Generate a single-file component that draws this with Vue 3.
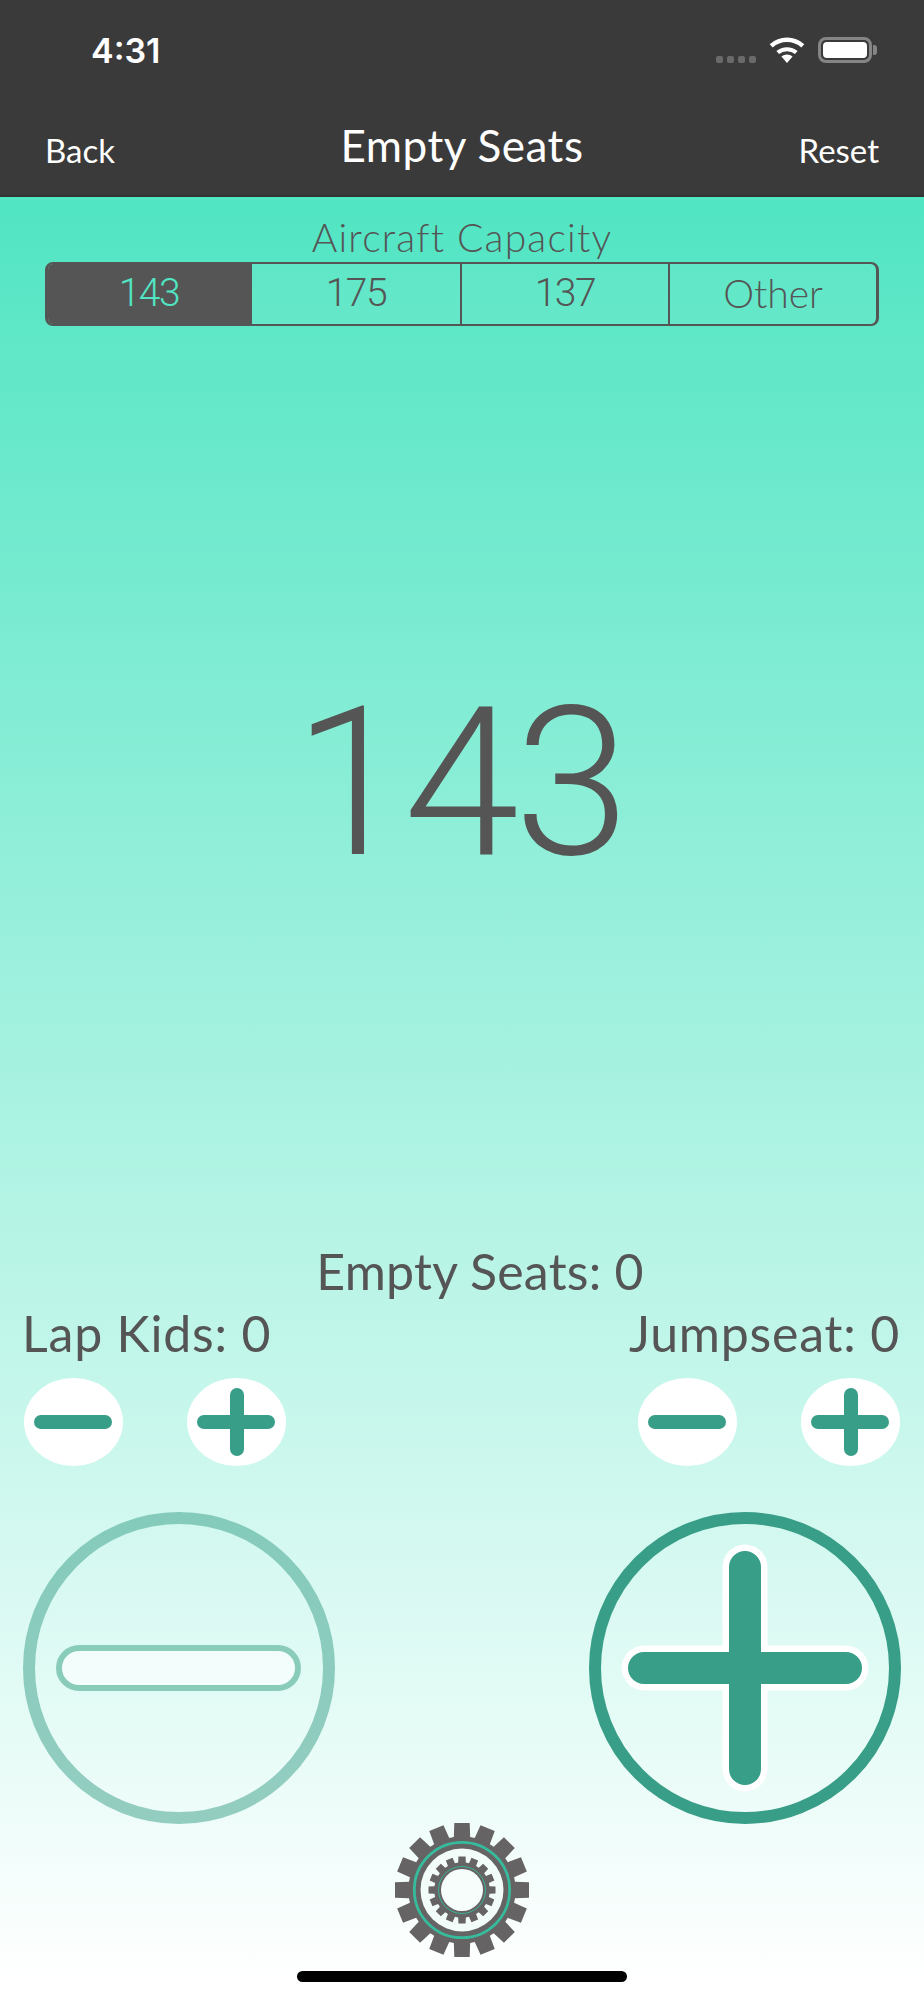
<script setup>
import { ref, computed } from 'vue';

const capacities = ['143', '175', '137', 'Other'];
const selected = ref(0);
const lapKids = ref(0);
const jumpseat = ref(0);
const emptySeats = ref(0);

const total = computed(() => 143 - emptySeats.value);

// builds a toothed ring around (0,0), 16 teeth
const gearPath = (outer, root, halfTooth) => {
  const teeth = 16;
  let d = '';
  for (let i = 0; i < teeth; i++) {
    const a = (i / teeth) * Math.PI * 2;
    const c = Math.cos(a);
    const s = Math.sin(a);
    const pt = (r, w) => `${(r * c - w * s).toFixed(2)} ${(r * s + w * c).toFixed(2)}`;
    const rootHalf = halfTooth * 1.06;
    d += `${i === 0 ? 'M' : 'L'}${pt(root, -rootHalf)} L${pt(outer, -halfTooth)} L${pt(outer, halfTooth)} L${pt(root, rootHalf)} `;
  }
  return d + 'Z';
};

const outerGear = gearPath(67, 53, 7.7);
const innerGear = gearPath(33.5, 27.5, 3.6);
</script>

<template>
  <div class="page">
    <header class="bar">
      <div class="status">
        <span class="clock">4:31</span>
        <div class="status-icons">
          <div class="dots"><i></i><i></i><i></i><i></i></div>
          <svg class="wifi" width="36" height="26" viewBox="0 0 36 26">
            <path d="M18 26 L12.4 19.6 A8.6 8.6 0 0 1 23.6 19.6 Z" fill="#fff" />
            <path d="M8.7 15.6 A14.2 14.2 0 0 1 27.3 15.6" fill="none" stroke="#fff" stroke-width="4" />
            <path d="M2.2 8.9 A23.5 23.5 0 0 1 33.8 8.9" fill="none" stroke="#fff" stroke-width="4.4" />
          </svg>
          <div class="battery"><div class="charge"></div></div>
          <div class="battery-cap"></div>
        </div>
      </div>
      <nav class="nav">
        <span class="nav-side">Back</span>
        <span class="nav-title">Empty Seats</span>
        <span class="nav-side reset">Reset</span>
      </nav>
    </header>

    <section class="capacity">
      <div class="capacity-label">Aircraft Capacity</div>
      <div class="segments">
        <div
          v-for="(c, i) in capacities"
          :key="c"
          class="segment"
          :class="{ active: i === selected, word: c === 'Other' }"
        >{{ c }}</div>
      </div>
    </section>

    <div class="readout">{{ total }}</div>

    <section class="counters">
      <div class="empty-label">Empty Seats: {{ emptySeats }}</div>
      <div class="counter-row">
        <div class="counter">
          <div class="counter-label">Lap Kids: {{ lapKids }}</div>
          <div class="counter-buttons">
            <button class="small-btn"><span class="h-bar"></span></button>
            <button class="small-btn"><span class="h-bar"></span><span class="v-bar"></span></button>
          </div>
        </div>
        <div class="counter">
          <div class="counter-label right">Jumpseat: {{ jumpseat }}</div>
          <div class="counter-buttons">
            <button class="small-btn"><span class="h-bar"></span></button>
            <button class="small-btn"><span class="h-bar"></span><span class="v-bar"></span></button>
          </div>
        </div>
      </div>
    </section>

    <section class="big-buttons">
      <svg class="minus-btn" width="314" height="314" viewBox="0 0 314 314">
        <circle cx="157" cy="157" r="150" fill="none" stroke="#389e87" stroke-opacity="0.5" stroke-width="12" />
        <rect x="37" y="137" width="239" height="40" rx="20" fill="#fff" fill-opacity="0.6" stroke="#8accba" stroke-width="6" />
      </svg>
      <svg class="plus-btn" width="314" height="314" viewBox="0 0 314 314">
        <circle cx="157" cy="157" r="150" fill="none" stroke="#389e87" stroke-width="12" />
        <path
          d="M157 56 V258 M56 157 H258"
          fill="none"
          stroke="#fff"
          stroke-width="45"
          stroke-linecap="round"
        />
        <path
          d="M157 56 V258 M56 157 H258"
          fill="none"
          stroke="#389e87"
          stroke-width="32"
          stroke-linecap="round"
        />
      </svg>
    </section>

    <div class="gear-wrap">
      <svg width="134" height="134" viewBox="-67 -67 134 134">
        <path :d="outerGear" fill="#666364" />
        <circle r="41.5" fill="#f2fcf9" />
        <circle r="47.7" fill="none" stroke="#36bb9c" stroke-width="2.8" />
        <path :d="innerGear" fill="#666364" />
        <circle r="21" fill="#f6fdfb" />
        <circle r="23.5" fill="none" stroke="#36bb9c" stroke-width="0.9" />
      </svg>
    </div>

    <div class="home"></div>
  </div>
</template>

<style>
html, body {
  margin: 0;
  background: #fff;
}
</style>

<style scoped>
.page {
  width: 924px;
  height: 2000px;
  display: flex;
  flex-direction: column;
  overflow: hidden;
  font-family: Lato, "Noto Sans", sans-serif;
  font-weight: 300;
  color: #555;
  background: linear-gradient(to bottom, #51e5c3 197px, #ffffff 1985px);
}

.bar {
  height: 197px;
  box-sizing: border-box;
  background: #3a3a3a;
  border-bottom: 2px solid #333;
  color: #fff;
  padding: 0 45px;
  flex-shrink: 0;
}

.status {
  height: 100px;
  display: flex;
  justify-content: space-between;
  align-items: flex-start;
}

.clock {
  font-family: Inter, sans-serif;
  font-weight: 600;
  font-size: 34px;
  line-height: 40px;
  margin: 31px 0 0 46px;
}

.status-icons {
  display: flex;
  align-items: flex-end;
  margin: 37px 2px 0 0;
  height: 26px;
}

.dots {
  display: flex;
  gap: 4px;
  margin-right: 13px;
}

.dots i {
  width: 7px;
  height: 7px;
  border-radius: 2px;
  background: #6a6a6a;
}

.wifi {
  margin-right: 13px;
}

.battery {
  width: 54px;
  height: 26px;
  box-sizing: border-box;
  border: 3px solid #858585;
  border-radius: 8px;
  padding: 2px;
}

.charge {
  height: 100%;
  background: #fff;
  border-radius: 4px;
}

.battery-cap {
  width: 4px;
  height: 10px;
  margin: 0 0 8px 1px;
  background: #858585;
  border-radius: 0 3px 3px 0;
}

.nav {
  display: grid;
  grid-template-columns: 1fr auto 1fr;
  align-items: center;
  height: 90px;
  font-weight: 400;
}

.nav-side {
  font-size: 33px;
  line-height: 40px;
  margin-top: 10px;
}

.reset {
  text-align: right;
}

.nav-title {
  font-size: 44px;
  line-height: 50px;
  letter-spacing: 0.5px;
}

.capacity {
  padding: 17px 45px 0;
  flex-shrink: 0;
}

.capacity-label {
  font-size: 39px;
  line-height: 46px;
  letter-spacing: 1.2px;
  text-align: center;
  height: 48px;
}

.segments {
  display: grid;
  grid-template-columns: 204px 210px 208px 1fr;
  height: 64px;
  box-sizing: border-box;
  border-style: solid;
  border-color: #555;
  border-width: 2px 3px;
  border-radius: 8px;
  overflow: hidden;
  background: rgba(255, 255, 255, 0.05);
}

.segment {
  display: flex;
  align-items: center;
  justify-content: center;
  font-family: Roboto, sans-serif;
  font-size: 39px;
  letter-spacing: -1.4px;
  padding-bottom: 3px;
  border-right: 2px solid #555;
}

.segment.word {
  font-family: Lato, sans-serif;
  letter-spacing: 0;
  border-right: none;
}

.segment.active {
  background: #555;
  color: #51e5c3;
}

.readout {
  flex: 1;
  display: flex;
  align-items: center;
  justify-content: center;
  font-family: Roboto, sans-serif;
  font-size: 208px;
  letter-spacing: -5px;
  line-height: 1;
  padding: 0 6px 4px 0;
}

.counters {
  flex-shrink: 0;
  font-weight: 400;
}

.empty-label {
  font-size: 50px;
  line-height: 56px;
  letter-spacing: 0.25px;
  text-align: center;
  padding-left: 36px;
}

.counter-row {
  display: flex;
  justify-content: space-between;
  padding: 6px 24px 0;
}

.counter {
  width: 262px;
  display: flex;
  flex-direction: column;
}

.counter-label {
  font-size: 50px;
  line-height: 56px;
  letter-spacing: 0.8px;
  white-space: nowrap;
  margin-left: -2px;
}

.counter-label.right {
  margin-left: -20px;
  text-align: right;
}

.counter-buttons {
  display: flex;
  justify-content: space-between;
  margin-top: 17px;
}

.small-btn {
  position: relative;
  width: 99px;
  height: 88px;
  padding: 0;
  border: none;
  border-radius: 50%;
  background: #fff;
}

.h-bar,
.v-bar {
  position: absolute;
  background: #389e87;
  border-radius: 7px;
}

.h-bar {
  left: 10px;
  right: 11px;
  top: 37px;
  height: 14px;
}

.v-bar {
  left: 43px;
  width: 14px;
  top: 10px;
  bottom: 10px;
}

.big-buttons {
  display: flex;
  justify-content: space-between;
  padding: 45px 22px 0;
  flex-shrink: 0;
}

.gear-wrap {
  display: flex;
  justify-content: center;
  margin-top: -2px;
  flex-shrink: 0;
}

.home {
  width: 330px;
  height: 11px;
  margin: 14px auto 18px;
  border-radius: 6px;
  background: #000;
  flex-shrink: 0;
}
</style>
